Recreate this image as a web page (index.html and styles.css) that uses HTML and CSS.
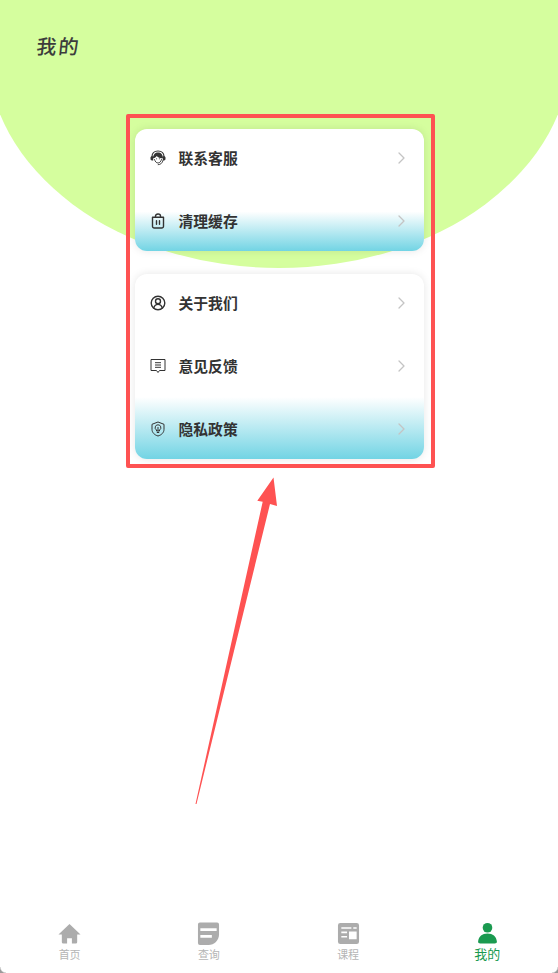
FILE: index.html
```html
<!DOCTYPE html>
<html lang="zh-CN">
<head>
<meta charset="utf-8">
<title>我的</title>
<link rel="stylesheet" href="styles.css">
</head>
<body>
<div class="screen">
  <div class="blob"></div>
  <main class="content">
    <h1 class="title">我的</h1>
    <section class="card">
      <div class="row">
        <svg class="icon" viewBox="0 0 16 16"><path class="band" d="M1.900 7C2 3.300 4.500 1 8 1s6 2.300 6.100 6"/><path class="fill" d="M3.200 8.200C3 4.400 5.200 2.400 8 2.400s5 2 4.800 5.800c-2.700 0-4.800-.7-6.100-2.300-.7 1.300-1.800 2-3.500 2.300zM.5 7.700C.5 6.900 1.100 6.300 2 6.300h1.200v4.200H2c-.9 0-1.500-.6-1.500-1.400zM15.500 7.700c0-.8-.6-1.400-1.500-1.400h-1.200v4.200H14c.9 0 1.500-.6 1.500-1.400z"/><path class="line-sm" d="M4.500 9.500c.6 2.200 1.900 3.500 3.500 3.500 1.600 0 2.900-1.300 3.500-3.500M6.500 8.800h.2M9.300 8.800h.2M13 10.500c-.6 2.500-2.300 4.200-4.800 4.200"/></svg>
        <span class="label">联系客服</span>
        <svg class="chev" viewBox="0 0 7 12"><path d="M1 1l5 5-5 5"/></svg>
      </div>
      <div class="row row-end row-short">
        <svg class="icon" viewBox="0 0 16 16"><path class="line" d="M2.500 4.300h11v8.900a1.800 1.800 0 0 1-1.800 1.800H4.300a1.800 1.800 0 0 1-1.800-1.800zM5.500 4.300V3C5.500 1.900 6.500 1 8 1s2.500.9 2.500 2v1.300M6.500 7.800v3.400M9.500 7.800v3.400"/></svg>
        <span class="label">清理缓存</span>
        <svg class="chev" viewBox="0 0 7 12"><path d="M1 1l5 5-5 5"/></svg>
      </div>
    </section>
    <section class="card">
      <div class="row">
        <svg class="icon" viewBox="0 0 16 16"><circle class="line" cx="8" cy="8" r="6.800"/><circle class="line" cx="8" cy="6.300" r="2.500"/><path class="line" d="M3.700 13c.7-2.300 2.300-3.600 4.300-3.600s3.600 1.300 4.300 3.600"/></svg>
        <span class="label">关于我们</span>
        <svg class="chev" viewBox="0 0 7 12"><path d="M1 1l5 5-5 5"/></svg>
      </div>
      <div class="row">
        <svg class="icon" viewBox="0 0 16 16"><path class="thin" d="M1 1.500h14v11H9.500L8 14.500l-1.500-2H1zM5 4.700h6M5 7h6M5 9.300h6"/></svg>
        <span class="label">意见反馈</span>
        <svg class="chev" viewBox="0 0 7 12"><path d="M1 1l5 5-5 5"/></svg>
      </div>
      <div class="row row-end row-long">
        <svg class="icon" viewBox="0 0 16 16"><path class="thin" d="M8 1l6 2.300v5c0 3.300-2.500 5.700-6 6.700-3.500-1-6-3.400-6-6.700v-5z"/><path class="thin" d="M8 3.800a2.800 2.800 0 0 0-1.500 5.200v1h3V9A2.800 2.800 0 0 0 8 3.800zM6.800 11.500h2.400M8 6v4"/></svg>
        <span class="label">隐私政策</span>
        <svg class="chev" viewBox="0 0 7 12"><path d="M1 1l5 5-5 5"/></svg>
      </div>
    </section>
  </main>
  <nav class="tabbar">
    <div class="tab">
      <svg class="tab-icon" viewBox="0 0 24 24"><path d="M12 2L.5 13h3.500v8a1.500 1.500 0 0 0 1.500 1.500h4v-5.500h5v5.500h4a1.500 1.500 0 0 0 1.500-1.500v-8h3.500z"/></svg>
      <span>首页</span>
    </div>
    <div class="tab">
      <svg class="tab-icon" viewBox="0 0 24 24"><path fill-rule="evenodd" d="M3 .5h18a2 2 0 0 1 2 2V13c0 6-5 11-11 11H3a2 2 0 0 1-2-2V2.500A2 2 0 0 1 3 .5zM3.500 6.500v3h17v-3zM3.500 13.500v3h12v-3z"/></svg>
      <span>查询</span>
    </div>
    <div class="tab">
      <svg class="tab-icon" viewBox="0 0 24 24"><path fill-rule="evenodd" d="M3.500 1h17A2.500 2.500 0 0 1 23 3.500v17a2.500 2.500 0 0 1-2.500 2.500h-17A2.500 2.500 0 0 1 1 20.500v-17A2.500 2.500 0 0 1 3.500 1zM4.500 5.500v1.500h10.500V5.500zM17 5.500v1.500h3.500V5.500zM12.500 10v8h8v-8zM4.500 10v1.800h6V10zM4.500 14.500v1.800h6v-1.800z"/></svg>
      <span>课程</span>
    </div>
    <div class="tab tab-active">
      <svg class="tab-icon" viewBox="0 0 24 24"><circle cx="12" cy="6" r="5"/><path d="M4.500 22.500c-1.500 0-2.500-.9-2.300-2.100C2.800 15 6.500 12 12 12s9.200 3 9.800 8.400c.2 1.200-.8 2.100-2.300 2.100z"/></svg>
      <span>我的</span>
    </div>
  </nav>
  <span class="corner corner-left"></span>
  <span class="corner corner-right"></span>
  <div class="frame"></div>
  <svg class="arrow" viewBox="0 0 558 973"><path d="M195.500 804L196.500 804 270 504 277 506 273.500 477.500 257.300 500.700 262.700 501.700z"/></svg>
</div>
</body>
</html>
```
FILE: styles.css
```css
* { box-sizing: border-box; }
html, body { margin: 0; padding: 0; }
body {
  font-family: "Noto Sans CJK SC", "Noto Sans", sans-serif;
  background: #fff;
}
.screen {
  position: relative;
  width: 558px;
  height: 973px;
  overflow: hidden;
  background: #fff;
  display: flex;
  flex-direction: column;
}
.blob {
  position: absolute;
  left: -13px;
  top: -168px;
  width: 584px;
  height: 436px;
  border-radius: 50%;
  background: #d5fe9e;
}
.content {
  position: relative;
  flex: 1;
  display: flex;
  flex-direction: column;
  align-items: center;
}
.title {
  align-self: flex-start;
  margin: 32px 0 0 38px;
  height: 97px;
  font-size: 20px;
  line-height: 28px;
  font-weight: 500;
  letter-spacing: 2px;
  color: #3c3c3c;
  transform: skewX(-6deg);
  transform-origin: 0 0;
}
.card {
  width: 289px;
  margin-bottom: 23px;
  border-radius: 12px;
  background: #fff;
  box-shadow: 0 0 8px rgba(0, 0, 0, .1);
  overflow: hidden;
  display: flex;
  flex-direction: column;
  gap: 5px;
}
.row {
  height: 58px;
  flex: none;
  padding: 0 19px 0 15px;
  display: flex;
  align-items: center;
  color: #333;
}
.row-end {
  background: linear-gradient(#fff 0, #72d4e4 100%);
}
.row-short {
  height: 59px;
  padding-bottom: 1px;
  background: linear-gradient(#fff 0, #fff 33%, #72d4e4 100%);
}
.row-long {
  height: 61.500px;
  margin-top: -3px;
  padding-top: 3px;
  padding-bottom: .5px;
}
.icon { width: 16px; height: 16px; flex: none; margin-right: 13px; }
.fill { fill: #333; }
.band { fill: none; stroke: #333; stroke-width: 1.200; stroke-linecap: round; }
.line { fill: none; stroke: #333; stroke-width: 1.400; stroke-linecap: round; stroke-linejoin: round; }
.line-sm { fill: none; stroke: #333; stroke-width: .9; stroke-linecap: round; stroke-linejoin: round; }
.thin { fill: none; stroke: #333; stroke-width: 1; stroke-linejoin: round; }
.label {
  flex: 1;
  font-size: 14.800px;
  line-height: 16px;
  font-weight: 700;
}
.chev { width: 7px; height: 12px; flex: none; }
.chev path { fill: none; stroke: #c4c4c4; stroke-width: 1.300; stroke-linecap: round; stroke-linejoin: round; }
.tabbar {
  position: relative;
  height: 53px;
  padding-right: 1px;
  display: grid;
  grid-template-columns: repeat(4, 1fr);
  background: #fff;
}
.tab {
  display: flex;
  flex-direction: column;
  align-items: center;
  padding-top: 2px;
  font-size: 11px;
  line-height: 14px;
  color: #b5b5b5;
  fill: #acacac;
}
.tab-icon { width: 23px; height: 23px; flex: none; margin-bottom: 2px; }
.tab-active { color: #1a9a50; fill: #1a9a50; font-size: 13px; line-height: 14px; }
.corner {
  position: absolute;
  bottom: 0;
  width: 6px;
  height: 6px;
}
.corner-left {
  left: 0;
  background: radial-gradient(circle at 6px 0, transparent 5px, #9a9a9a 6.500px);
}
.corner-right {
  right: 0;
  background: radial-gradient(circle at 0 0, transparent 5px, #9a9a9a 6.500px);
}
.frame {
  position: absolute;
  left: 126px;
  top: 114px;
  width: 309px;
  height: 354px;
  border: 4px solid #fe5252;
  border-radius: 2px;
}
.arrow {
  position: absolute;
  inset: 0;
  width: 558px;
  height: 973px;
  fill: #fe5252;
}
```
